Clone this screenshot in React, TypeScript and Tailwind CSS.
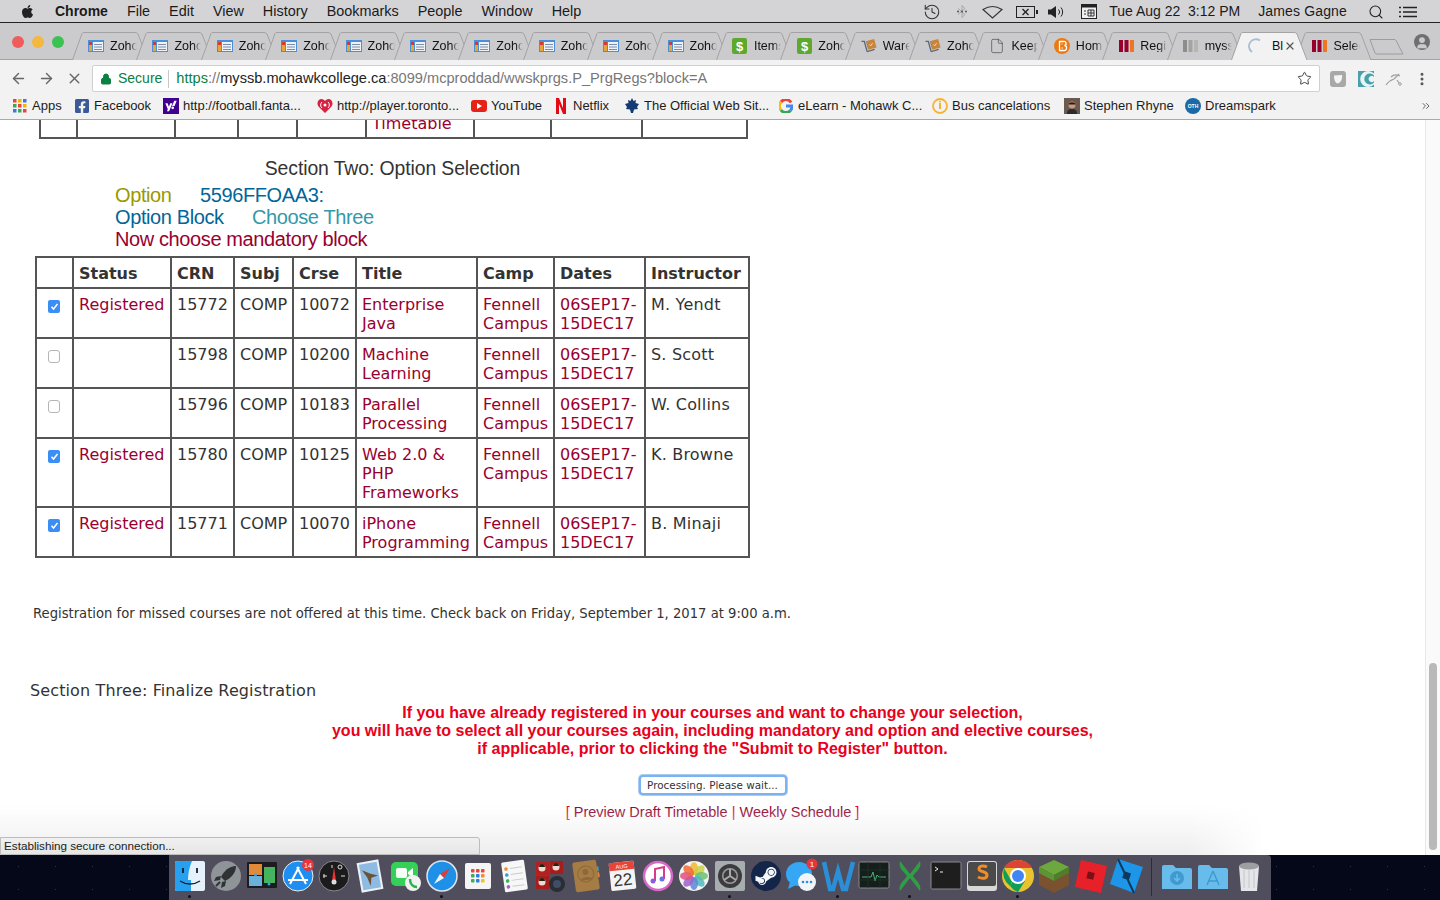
import React from "react";
import { ArrowLeft, ArrowRight, X, Lock, Star, Search, History, MoreVertical, File, User, ChevronsRight } from "lucide-react";
import { FaApple, FaFacebookSquare, FaYahoo, FaSteamSymbol } from "react-icons/fa";

const sans = "font-['Liberation_Sans',Arial,sans-serif]";

function ZohoIcon() {
  return (
    <svg width="16" height="14" viewBox="0 0 16 14">
      <rect x="0" y="1" width="16" height="12" fill="#4a8fd8" />
      <rect x="1" y="3" width="3" height="9" fill="#e8a33a" />
      <rect x="1" y="3" width="3" height="3" fill="#d83a2a" />
      <rect x="5" y="3" width="10" height="9" fill="#eef2f7" />
      <path d="M6 5.500h8M6 8h8M6 10.500h8" stroke="#7a8ea8" strokeWidth="1" />
    </svg>
  );
}
function DollarIcon() {
  return (
    <svg width="15" height="16" viewBox="0 0 15 16">
      <rect width="15" height="16" rx="2" fill="#5fa82e" />
      <text x="7.500" y="13" textAnchor="middle" fontSize="13" fontWeight="700" fill="#fff" fontFamily="Liberation Sans">$</text>
    </svg>
  );
}
function WareIcon() {
  return (
    <svg width="17" height="16" viewBox="0 0 17 16">
      <path d="M5 3l9-2.500 2.500 9-9 2.500z" fill="#c5853f" />
      <path d="M9 6.500l1.300 1.300 2-2.800" stroke="#f5e6d0" strokeWidth="1" fill="none" />
      <path d="M0.500 3l3 0 3 11" stroke="#4a6a8a" strokeWidth="1.400" fill="none" />
      <path d="M6.500 14l8-2.500" stroke="#666" strokeWidth="1.400" />
    </svg>
  );
}
function BarsIcon({ gray }: { gray?: boolean }) {
  return (
    <svg width="15" height="12" viewBox="0 0 15 12">
      <rect x="0" width="4" height="12" fill={gray ? "#8d8d8d" : "#98002e"} />
      <rect x="5.500" width="4" height="12" fill={gray ? "#a3a3a3" : "#98002e"} />
      <rect x="11" width="4" height="12" fill={gray ? "#b5b5b5" : "#ee7623"} />
    </svg>
  );
}
function CircleB() {
  return (
    <svg width="16" height="16" viewBox="0 0 16 16">
      <circle cx="8" cy="8" r="8" fill="#ec7a12" />
      <path d="M5.500 3.500h4a2 2 0 0 1 1 4 2.300 2.300 0 0 1-1 5h-4z" fill="none" stroke="#fff" strokeWidth="1.300" />
      <path d="M7.500 6h1M7.500 10h1.500" stroke="#fff" strokeWidth="1" />
    </svg>
  );
}

type Tab = { label: string; icon: React.ReactNode; active?: boolean };
const zoho = <ZohoIcon />;
const tabs: Tab[] = [
  ...Array.from({ length: 10 }, () => ({ label: "Zoho", icon: zoho })),
  { label: "Items", icon: <DollarIcon /> },
  { label: "Zoho", icon: <DollarIcon /> },
  { label: "Wareh", icon: <WareIcon /> },
  { label: "Zoho", icon: <WareIcon /> },
  { label: "Keep", icon: <File size={16} strokeWidth={1} color="#444" /> },
  { label: "Hom", icon: <CircleB /> },
  { label: "Regis", icon: <BarsIcon /> },
  { label: "myss", icon: <BarsIcon gray /> },
  {
    label: "Bl",
    active: true,
    icon: (
      <svg width="16" height="16" viewBox="0 0 16 16">
        <path d="M13 2.500A7 7 0 0 0 5 14" stroke="#a9bed4" strokeWidth="1.800" fill="none" />
      </svg>
    ),
  },
  { label: "Select", icon: <BarsIcon /> },
];

function TabItem({ t }: { t: Tab }) {
  return (
    <div className={`relative w-[64.400px] h-[28px] shrink-0 ${t.active ? "z-10" : ""}`}>
      <svg className="absolute left-[-3px] top-0" width="79" height="28" viewBox="0 0 79 28">
        <path
          d="M0.500 28 L10 1.500 Q10.500 0.500 12 0.500 L63 0.500 Q65 0.500 66 2 L76 28"
          fill={t.active ? "#f2f2f2" : "#cbcbcd"}
          stroke="#a3a3a5"
        />
      </svg>
      <div className="relative flex items-center h-full pl-[13px] gap-[6px]">
        <span className="w-[16px] flex justify-center shrink-0">{t.icon}</span>
        {t.active ? (
          <>
            <span className={`${sans} text-[12.500px] leading-none text-[#111] pl-[3px] w-[14px] overflow-hidden whitespace-nowrap`}>Bl</span>
            <X size={12} color="#555" strokeWidth={2.400} className="ml-[-5px]" />
          </>
        ) : (
          <span className={`${sans} text-[12.500px] leading-none text-[#111] w-[27px] overflow-hidden whitespace-nowrap [mask-image:linear-gradient(to_right,black_72%,transparent)]`}>{t.label}</span>
        )}
      </div>
    </div>
  );
}

type BM = { label: string; w: number; icon: React.ReactNode };
const bookmarks: BM[] = [
  {
    label: "Apps",
    w: 62,
    icon: (
      <svg width="14" height="14" viewBox="0 0 14 14">
        {[0, 5, 10].flatMap((y, i) =>
          [0, 5, 10].map((x, j) => (
            <rect key={`${i}${j}`} x={x} y={y} width="3.500" height="3.500" fill={["#e8453c", "#f4b400", "#3b78e7", "#3da854", "#e8453c", "#f4b400", "#3b78e7", "#3da854", "#e8453c"][i * 3 + j]} />
          ))
        )}
      </svg>
    ),
  },
  { label: "Facebook", w: 89, icon: <FaFacebookSquare size={16} color="#3b5998" /> },
  {
    label: "http://football.fanta...",
    w: 154,
    icon: (
      <span className="w-[16px] h-[16px] bg-[#400090] flex items-center justify-center">
        <FaYahoo size={12} color="#fff" />
      </span>
    ),
  },
  {
    label: "http://player.toronto...",
    w: 154,
    icon: (
      <svg width="16" height="14" viewBox="0 0 16 14">
        <path d="M8 14L1.500 7.500C-1 4 1.500 0 4.500 0 6 0 7.200 1 8 2 8.800 1 10 0 11.500 0 14.500 0 17 4 14.500 7.500z" fill="#d6213f" />
        <circle cx="8" cy="6" r="1.500" fill="#fff" />
        <path d="M5 9a4 4 0 0 1 0-6M11 9a4 4 0 0 0 0-6" stroke="#fff" fill="none" />
      </svg>
    ),
  },
  {
    label: "YouTube",
    w: 82,
    icon: (
      <svg width="16" height="12" viewBox="0 0 16 12">
        <rect width="16" height="12" rx="3" fill="#e62117" />
        <path d="M6 3l5 3-5 3z" fill="#fff" />
      </svg>
    ),
  },
  {
    label: "Netflix",
    w: 71,
    icon: (
      <svg width="10" height="16" viewBox="0 0 10 16">
        <path d="M0 0h3l4 10V0h3v16H7L3 6v10H0z" fill="#e50914" />
      </svg>
    ),
  },
  {
    label: "The Official Web Sit...",
    w: 154,
    icon: (
      <svg width="14" height="16" viewBox="0 0 14 16">
        <path d="M7 0l1.500 3L11 2l-.5 3L14 6l-2 3 1 2-4 .5-1 3.500H6l-1-3.500L1 11l1-2-2-3 3.500-1L3 2l2.500 1z" fill="#123a73" />
      </svg>
    ),
  },
  {
    label: "eLearn - Mohawk C...",
    w: 154,
    icon: (
      <svg width="14" height="14" viewBox="0 0 14 14" fill="none" strokeWidth="3">
        <path d="M12 3.500A6 6 0 0 0 2 3" stroke="#ea4335" />
        <path d="M2 3a6 6 0 0 0 0 8" stroke="#fbbc05" />
        <path d="M2 11a6 6 0 0 0 9.500 0.500" stroke="#34a853" />
        <path d="M11.500 11.500A6 6 0 0 0 13 7H7" stroke="#4285f4" />
      </svg>
    ),
  },
  {
    label: "Bus cancelations",
    w: 132,
    icon: (
      <svg width="16" height="16" viewBox="0 0 16 16" fill="none">
        <circle cx="8" cy="8" r="7" stroke="#f5b335" strokeWidth="1.800" />
        <path d="M8 5v6" stroke="#f5b335" strokeWidth="2" />
        <circle cx="8" cy="3.500" r="1" fill="#f5b335" />
      </svg>
    ),
  },
  {
    label: "Stephen Rhyne",
    w: 121,
    icon: (
      <svg width="16" height="16" viewBox="0 0 16 16">
        <rect width="16" height="16" fill="#6a5a50" />
        <circle cx="8" cy="7" r="3.500" fill="#c99a7c" />
        <path d="M4.500 6.500c0-3 7-3 7 0" fill="#2a1e18" />
        <path d="M3 16c0-4 2-5 5-5s5 1 5 5z" fill="#2c2a2e" />
      </svg>
    ),
  },
  {
    label: "Dreamspark",
    w: 100,
    icon: (
      <svg width="16" height="16" viewBox="0 0 16 16">
        <circle cx="8" cy="8" r="8" fill="#1a6aa5" />
        <text x="8" y="10" textAnchor="middle" fontSize="5" fontWeight="700" fill="#fff" fontFamily="Liberation Sans">OTH</text>
      </svg>
    ),
  },
];

type Row = { checked?: boolean; status: string; crn: string; crse: string; title: string[]; inst: string };
const rows: Row[] = [
  { checked: true, status: "Registered", crn: "15772", crse: "10072", title: ["Enterprise", "Java"], inst: "M. Yendt" },
  { status: "", crn: "15798", crse: "10200", title: ["Machine", "Learning"], inst: "S. Scott" },
  { status: "", crn: "15796", crse: "10183", title: ["Parallel", "Processing"], inst: "W. Collins" },
  { checked: true, status: "Registered", crn: "15780", crse: "10125", title: ["Web 2.0 &", "PHP", "Frameworks"], inst: "K. Browne" },
  { checked: true, status: "Registered", crn: "15771", crse: "10070", title: ["iPhone", "Programming"], inst: "B. Minaji" },
];

const td = "border-2 border-[#555] align-top pt-[6px] pl-[5px] pr-0 pb-[4px] whitespace-nowrap";
const th = "border-2 border-[#555] align-top pt-[6px] pl-[5px] pb-[3px] text-left font-bold";
const maroon = "text-[#99002f]";

function Check({ on }: { on?: boolean }) {
  return on ? (
    <span className="w-[12px] h-[13px] ml-[6px] rounded-[2px] bg-[#3b8ef5] flex items-center justify-center">
      <svg width="9" height="9" viewBox="0 0 9 9">
        <path d="M1.500 4.800L3.500 7 7.500 2" stroke="#fff" strokeWidth="1.500" fill="none" />
      </svg>
    </span>
  ) : (
    <span className="block w-[12px] h-[13px] ml-[6px] rounded-[3px] border border-[#b5b5b5] bg-white" />
  );
}

const stripCols = [37, 98, 63, 59, 69, 108, 77, 91, 105];

function Ico({ children }: { children: React.ReactNode }) {
  return (
    <svg width="36" height="36" viewBox="0 0 36 36">
      {children}
    </svg>
  );
}

const petals = ["#f4b730", "#c8d040", "#6cc070", "#50b8c0", "#5a88d8", "#a060c8", "#e05080", "#ee6a3c"];

const dock: { el: React.ReactNode; dot?: boolean }[] = [
  { dot: true, el: <Ico><rect x="3" y="3" width="30" height="30" rx="2" fill="#e6f2fb" /><path d="M3 5a2 2 0 0 1 2-2h15c-3 7-4 13-4 19h3v11H5a2 2 0 0 1-2-2z" fill="#27a0f0" /><path d="M11 10v5M25 10v5" stroke="#123" strokeWidth="1.800" /><path d="M8 23c6 4 14 4 20 0" stroke="#123" strokeWidth="1.300" fill="none" /></Ico> },
  { el: <Ico><circle cx="18" cy="18" r="15" fill="#8f9498" /><path d="M28 8c-7 0-12 5-15 11l4 4c6-3 11-8 11-15z" fill="#2f3336" /><path d="M13 18l-5 1-2 4 6-1zM18 23l-1 5-4 2 1-6z" fill="#2f3336" /><path d="M12 24l-4 4" stroke="#2f3336" strokeWidth="2" /></Ico> },
  { el: <Ico><rect x="3" y="4" width="30" height="26" rx="1" fill="#1c1c1e" /><rect x="5" y="6" width="13" height="11" fill="#e08a3a" /><rect x="5" y="18" width="13" height="10" fill="#6bb0d8" /><rect x="20" y="9" width="11" height="16" fill="#44b45e" /><circle cx="11.500" cy="17" r="1.500" fill="#3aa0e8" /><circle cx="25" cy="26" r="1.500" fill="#3aa0e8" /></Ico> },
  { el: <Ico><circle cx="18" cy="18" r="15" fill="#1f8ef1" stroke="#e8eef5" /><path d="M19 9l-9 17M17 9l9 17M8 22h20" stroke="#fff" strokeWidth="2" /><circle cx="28" cy="7" r="6" fill="#e8353a" /><text x="28" y="9.500" textAnchor="middle" fontSize="7" fill="#fff" fontFamily="Liberation Sans">14</text></Ico> },
  { el: <Ico><circle cx="18" cy="18" r="15" fill="#1b1b1d" stroke="#888" /><path d="M18 9l2 14h-4z" fill="#e33" /><circle cx="18" cy="24" r="2.500" fill="#ddd" /><path d="M7 18h4M8 16v4M25 18h4M16 7v3" stroke="#ddd" /><circle cx="24" cy="9" r="2" fill="none" stroke="#ddd" /></Ico> },
  { el: <Ico><g transform="rotate(-10 18 18)"><rect x="7" y="3" width="22" height="30" fill="#eef3f8" /><rect x="9" y="5" width="18" height="26" fill="#8dbbe4" /><path d="M11 11l8 5 7 3-7 1-2 8-2-9z" fill="#6b5338" /></g></Ico> },
  { el: <Ico><rect x="3" y="4" width="27" height="24" rx="5" fill="#34d058" /><rect x="8" y="10" width="11" height="10" rx="2" fill="#f4fff6" /><path d="M20 14l5-4v10l-5-4z" fill="#f4fff6" /><circle cx="25" cy="25" r="8" fill="#f2f2f2" /><path d="M22 21c0 5 3 8 7 8" stroke="#2ab24a" strokeWidth="2.500" fill="none" /></Ico> },
  { dot: true, el: <Ico><circle cx="18" cy="18" r="15" fill="#1e90e8" stroke="#dfe6ee" strokeWidth="1.500" /><path d="M26 10l-6 10-4-4z" fill="#e8382f" /><path d="M10 26l6-10 4 4z" fill="#f2f2f2" /></Ico> },
  { el: <Ico><rect x="5" y="5" width="26" height="26" rx="2" fill="#f5f5f5" />{[0, 1, 2].flatMap((a) => [0, 1, 2].map((b) => <rect key={`${a}${b}`} x={11 + b * 5} y={11 + a * 5} width="3.500" height="3.500" rx="0.800" fill={["#e8453c", "#e8453c", "#e8453c", "#3dae55", "#2d7fe0", "#f28b2c", "#3dae55", "#2d7fe0", "#f4c020"][a * 3 + b]} />))}</Ico> },
  { el: <Ico><g transform="rotate(-8 18 18)"><rect x="7" y="3" width="23" height="30" rx="1.500" fill="#f7f7f7" /><circle cx="11" cy="10" r="1.800" fill="#f28b2c" /><circle cx="11" cy="16" r="1.800" fill="#2d9fe0" /><circle cx="11" cy="22" r="1.800" fill="#3dae55" /><circle cx="11" cy="28" r="1.800" fill="#b05ad8" /><path d="M15 10h12M15 16h12M15 22h12M15 28h12" stroke="#ccc" /></g></Ico> },
  { el: <Ico><rect x="4" y="4" width="13" height="13" fill="#b32020" /><rect x="18" y="3" width="13" height="13" fill="#a51d1d" /><rect x="4" y="18" width="13" height="13" fill="#a51d1d" /><circle cx="10" cy="10" r="3.500" fill="#f0d8d0" /><path d="M7 9c0-4 6-4 6 0z" fill="#221" /><circle cx="24" cy="9" r="3.500" fill="#f0d8d0" /><path d="M21 8c0-4 6-4 6 0z" fill="#221" /><circle cx="10" cy="24" r="3.500" fill="#f0d8d0" /><path d="M7 23c0-4 6-4 6 0z" fill="#221" /><circle cx="25" cy="26" r="8" fill="#2a2d33" /><circle cx="25" cy="26" r="4" fill="#3f4d68" /></Ico> },
  { el: <Ico><g transform="rotate(-8 18 18)"><rect x="6" y="3" width="24" height="30" rx="2" fill="#a67c45" /><circle cx="18" cy="16" r="8" fill="none" stroke="#8d683a" /><circle cx="18" cy="14" r="3" fill="#8d683a" /><path d="M12 22c1-4 11-4 12 0" fill="#8d683a" /><rect x="30" y="10" width="1.500" height="5" fill="#4aa5b0" /><rect x="30" y="16" width="1.500" height="5" fill="#e88a3a" /></g></Ico> },
  { el: <Ico><g transform="rotate(-6 18 18)"><rect x="6" y="4" width="25" height="28" rx="1.500" fill="#f4f4f4" /><rect x="6" y="4" width="25" height="8" fill="#e8443a" /><text x="18.500" y="10.500" textAnchor="middle" fontSize="5.500" fill="#fff" fontFamily="Liberation Sans">AUG</text><text x="18.500" y="27.500" textAnchor="middle" fontSize="17" fill="#333" fontFamily="Liberation Sans">22</text></g></Ico> },
  { el: <Ico><circle cx="18" cy="18" r="14" fill="#fff" stroke="#d668c8" strokeWidth="2.500" /><path d="M15 23V11l9-2v12" stroke="#d83a8a" strokeWidth="2" fill="none" /><circle cx="13" cy="23" r="2.500" fill="#8a5ae0" /><circle cx="22" cy="21" r="2.500" fill="#6a70e8" /></Ico> },
  { el: <Ico><circle cx="18" cy="18" r="15" fill="#f4f4f4" />{petals.map((c, i) => <ellipse key={c} cx="18" cy="10.500" rx="4" ry="6.500" fill={c} opacity=".85" transform={`rotate(${i * 45} 18 18)`} />)}</Ico> },
  { dot: true, el: <Ico><rect x="3" y="3" width="30" height="30" rx="2" fill="#a8adb0" /><circle cx="18" cy="18" r="12" fill="#3c3c3e" /><circle cx="18" cy="18" r="8" fill="#9a9a9c" /><circle cx="18" cy="18" r="6.500" fill="#3c3c3e" /><path d="M18 18V11M18 18l6 4M18 18l-6 4" stroke="#aaa" strokeWidth="2" /></Ico> },
  { el: <Ico><circle cx="18" cy="18" r="15" fill="#13264a" /><FaSteamSymbol x={6} y={6} size={24} color="#f4f6f8" /></Ico> },
  { el: <Ico><ellipse cx="15" cy="16" rx="13" ry="12" fill="#35a7f4" /><path d="M6 24l-2 7 8-4z" fill="#35a7f4" /><circle cx="23" cy="24" r="9" fill="#f2f4f7" /><circle cx="19" cy="24" r="1.300" fill="#2a8fe0" /><circle cx="23" cy="24" r="1.300" fill="#2a8fe0" /><circle cx="27" cy="24" r="1.300" fill="#2a8fe0" /><circle cx="28" cy="6" r="5.500" fill="#e8353a" /><text x="28" y="9" textAnchor="middle" fontSize="8" fill="#fff" fontFamily="Liberation Sans">1</text></Ico> },
  { dot: true, el: <Ico><path d="M4 4l6 27h3l5-18 5 18h3l7-27" stroke="#2b8fd8" strokeWidth="4.500" fill="none" /></Ico> },
  { el: <Ico><rect x="3" y="4" width="30" height="26" rx="1.500" fill="#141e1a" stroke="#8a8a8a" /><path d="M6 19h9l2-5 2 9 2-6 2 2h7" stroke="#4cae7a" fill="none" /><path d="M3 12h30M3 22h30M12 4v26M24 4v26" stroke="#25332c" strokeWidth=".7" /></Ico> },
  { dot: true, el: <Ico><path d="M8 3l10 13L28 3c2 8-4 10-7 15 3 5 9 8 7 15L18 20 8 33c-2-7 4-10 7-15C12 13 6 11 8 3z" fill="#2f9e44" /></Ico> },
  { el: <Ico><rect x="3" y="4" width="30" height="27" rx="1.500" fill="#1e1e1e" stroke="#8a8a8a" /><path d="M7 9l3 2-3 2M12 14h3" stroke="#eee" fill="none" /></Ico> },
  { el: <Ico><rect x="3" y="3" width="30" height="30" rx="3" fill="#d8d8d8" /><rect x="4" y="4" width="28" height="24" rx="2" fill="#4a4a4a" /><path d="M23 9c-4-2-8-1-8 2s8 2 8 6-5 4-9 2" stroke="#f28c28" strokeWidth="3" fill="none" /></Ico> },
  { dot: true, el: <Ico><circle cx="18" cy="18" r="16" fill="#e8c32e" /><path d="M18 2a16 16 0 0 1 14 8H18z" fill="#db4437" /><path d="M4 10a16 16 0 0 1 14-8v8z" fill="#db4437" /><path d="M4 10l8 14-2 4A16 16 0 0 1 4 10z" fill="#0f9d58" /><path d="M10 28l3-5h12l-7 11A16 16 0 0 1 10 28z" fill="#0f9d58" /><circle cx="18" cy="18" r="8" fill="#fff" /><circle cx="18" cy="18" r="6" fill="#4285f4" /></Ico> },
  { el: <Ico><path d="M18 2l15 7v18l-15 8-15-8V9z" fill="#7a5230" /><path d="M18 2l15 7-15 8-15-8z" fill="#6ba83e" /><path d="M3 9l15 8v6L3 15z" fill="#5d9435" /><path d="M33 9L18 17v6l15-8z" fill="#4e7e2c" /></Ico> },
  { el: <Ico><path d="M9 2l26 6-6 27L3 29z" fill="#e8202a" /><rect x="15" y="14" width="7" height="7" fill="#7a1016" transform="rotate(13 18 18)" /></Ico> },
  { el: <Ico><path d="M10 1l25 8-9 26L2 26z" fill="#1d95e8" /><path d="M10 1l16 34" stroke="#0d3a5c" strokeWidth="2" /><rect x="15" y="14" width="7" height="7" fill="#0d3a5c" transform="rotate(18 18 18)" /></Ico> },
];

const tailDock: React.ReactNode[] = [
  <Ico key="a"><path d="M3 9a2 2 0 0 1 2-2h9l3 3h14a2 2 0 0 1 2 2v19H3z" fill="#68bcec" /><circle cx="18" cy="20" r="7" fill="#3f9ad0" /><path d="M18 16v7M15 20l3 3 3-3" stroke="#68bcec" strokeWidth="1.500" fill="none" /></Ico>,
  <Ico key="b"><path d="M3 9a2 2 0 0 1 2-2h9l3 3h14a2 2 0 0 1 2 2v19H3z" fill="#68bcec" /><path d="M18 13l-6 14M18 13l6 14M13 23h10" stroke="#3f9ad0" strokeWidth="1.500" fill="none" /></Ico>,
  <Ico key="c"><path d="M8 8h20l-2 25H10z" fill="#e3e5e8" /><ellipse cx="18" cy="8" rx="10" ry="3.500" fill="#9c9ea2" /><path d="M13 12v18M18 12v18M23 12v18" stroke="#c4c6ca" /></Ico>,
];

export default function App() {
  return (
    <div className={`${sans} w-[1440px] h-[900px] overflow-hidden flex flex-col relative bg-white`}>
      {/* Menu bar */}
      <div className="h-[23px] shrink-0 bg-[#d4d4d7] border-b border-[#222] flex items-center pt-[1px] text-[14.400px] text-[#1a1a1a]">
        <div className="flex items-center pl-[20px] gap-[19px]">
          <FaApple size={15} color="#222" />
          <span className="font-bold text-[14px] ml-[1px]">Chrome</span>
          <span>File</span>
          <span>Edit</span>
          <span>View</span>
          <span>History</span>
          <span>Bookmarks</span>
          <span>People</span>
          <span>Window</span>
          <span>Help</span>
        </div>
        <div className="ml-auto flex items-center pr-[23px] text-[14px]">
          <History size={18} color="#333" strokeWidth={1.400} />
          <svg width="12" height="15" viewBox="0 0 12 15" className="ml-[15px]">
            <path d="M2 4.500l7 6-3 3V1.500l3 3-7 6" stroke="#999" strokeWidth="0.800" fill="none" />
            <circle cx="2" cy="7.500" r="1" fill="#555" />
            <circle cx="6" cy="7.500" r="1" fill="#555" />
            <circle cx="10" cy="7.500" r="1" fill="#555" />
          </svg>
          <svg width="21" height="14" viewBox="0 0 21 14" className="ml-[14px]">
            <path d="M1 4.500Q10.500 -1.500 20 4.500L10.500 13z" fill="none" stroke="#333" strokeWidth="1.100" />
          </svg>
          <svg width="22" height="14" viewBox="0 0 22 14" className="ml-[13px]">
            <rect x="0.500" y="1.500" width="18" height="11" fill="none" stroke="#222" />
            <rect x="20" y="5" width="2" height="4" fill="#222" />
            <path d="M6.500 4l6 6M12.500 4l-6 6" stroke="#222" strokeWidth="1.300" />
          </svg>
          <svg width="17" height="14" viewBox="0 0 17 14" className="ml-[10px]">
            <path d="M0 4.500h3L8 1v12L3 9.500H0z" fill="#222" />
            <path d="M10.500 4.500a3.500 3.500 0 0 1 0 5M13 2.500a7 7 0 0 1 0 9" stroke="#222" fill="none" />
          </svg>
          <svg width="16" height="15" viewBox="0 0 16 15" className="ml-[16px]">
            <rect x="0.500" y="0.500" width="15" height="14" fill="#eee" stroke="#222" />
            <rect x="0.500" y="0.500" width="15" height="3" fill="#222" />
            <path d="M3 7h2M3 10h2M7 6h6v6H7zM10 6v6M7 9h6" stroke="#333" fill="none" />
          </svg>
          <span className="ml-[12px]">Tue Aug 22&nbsp;&nbsp;3:12 PM</span>
          <span className="ml-[18px] tracking-[0.150px]">James Gagne</span>
          <Search size={16} color="#222" className="ml-[21px]" strokeWidth={1.600} />
          <svg width="18" height="12" viewBox="0 0 18 12" className="ml-[15px]">
            <path d="M0 1.500h2M4 1.500h14M0 6h2M4 6h14M0 10.500h2M4 10.500h14" stroke="#222" strokeWidth="1.500" />
          </svg>
        </div>
      </div>

      {/* Tab strip */}
      <div className="h-[37px] shrink-0 bg-[#cbcbcd] flex items-end relative border-b border-[#a3a3a5]">
        <div className="flex items-center gap-[8px] pl-[12px] self-center mt-[2px]">
          <span className="w-[12px] h-[12px] rounded-full bg-[#ee5c5c]" />
          <span className="w-[12px] h-[12px] rounded-full bg-[#f4b73f]" />
          <span className="w-[12px] h-[12px] rounded-full bg-[#3cc153]" />
        </div>
        <div className="flex ml-[11px] mb-[-1px]">
          {tabs.map((t, i) => (
            <TabItem key={i} t={t} />
          ))}
        </div>
        <svg width="36" height="17" viewBox="0 0 36 17" className="mb-[4px] ml-[6px] shrink-0">
          <path d="M1 1.500h24a2 2 0 0 1 2 1l7 13.500H8a2 2 0 0 1-2-1z" fill="#cbcbcd" stroke="#9c9c9e" />
        </svg>
        <span className="ml-[9px] mb-[9px] w-[16px] h-[16px] rounded-full bg-[#6f6f6f] flex items-end justify-center overflow-hidden shrink-0">
          <User size={14} color="#cbcbcd" fill="#cbcbcd" />
        </span>
      </div>

      {/* Toolbar */}
      <div className="h-[36px] shrink-0 bg-[#f2f2f2] flex items-center pl-[10px] pr-[10px] pt-[1px]">
        <ArrowLeft size={17} color="#666" strokeWidth={2} />
        <ArrowRight size={17} color="#666" strokeWidth={2} className="ml-[11px]" />
        <X size={17} color="#666" strokeWidth={2} className="ml-[11px]" />
        <div className="ml-[9px] w-[1228px] h-[27px] bg-white border border-[#d0d0d0] rounded-[2px] flex items-center text-[14.600px] shrink-0">
          <Lock size={12} fill="#0b8043" color="#0b8043" className="ml-[7px]" />
          <span className="ml-[6px] text-[14px] text-[#0b8043]">Secure</span>
          <span className="ml-[6px] mr-[7px] h-[18px] border-l border-[#c8c8c8]" />
          <span className="text-[#0b8043]">https</span>
          <span className="text-[#777]">://</span>
          <span className="text-[#222]">myssb.mohawkcollege.ca</span>
          <span className="text-[#777]">:8099/mcproddad/wwskprgs.P_PrgRegs?block=A</span>
          <Star size={15} color="#444" strokeWidth={1.600} className="ml-auto mr-[7px]" />
        </div>
        <span className="ml-[10px] w-[16px] h-[16px] rounded-[3px] bg-[#a8a8a8] flex items-center justify-center shrink-0">
          <svg width="10" height="10" viewBox="0 0 10 10">
            <path d="M1 1.500L9 1c.5 4-1 8-5 8.500C1.500 8 1 5 1 1.500z" fill="#f4f4f4" />
          </svg>
        </span>
        <svg width="16" height="16" viewBox="0 0 16 16" className="ml-[12px] shrink-0">
          <rect width="16" height="16" fill="#4aa0a8" />
          <path d="M16 2.500a8 8 0 1 0 0 11v-2a5.500 5.500 0 1 1 0-7zM16 6a3 3 0 1 0 0 4z" fill="#e8f5f5" />
        </svg>
        <svg width="18" height="16" viewBox="0 0 18 16" className="ml-[11px] shrink-0">
          <path d="M1 14c2-3 5-5 8-6M9 8l5-5M6 6c2-2 5-3 9-1M12 9l2 3" stroke="#a0a0a0" strokeWidth="1.200" fill="none" />
          <circle cx="15" cy="13" r="1.300" fill="none" stroke="#a0a0a0" />
        </svg>
        <MoreVertical size={16} color="#555" strokeWidth={2.500} className="ml-[11px]" />
      </div>

      {/* Bookmarks */}
      <div className="h-[24px] shrink-0 bg-[#f2f2f2] border-b border-[#a9a9a9] flex items-center pl-[12px] pb-[4px] text-[13px] text-[#1c1c1c]">
        {bookmarks.map((b, i) => (
          <div key={i} className="flex items-center shrink-0" style={{ width: b.w }}>
            <span className="w-[16px] h-[16px] flex items-center justify-center mr-[4px] shrink-0">{b.icon}</span>
            <span className="whitespace-nowrap">{b.label}</span>
          </div>
        ))}
        <ChevronsRight size={12} color="#666" className="ml-auto mr-[8px]" />
      </div>

      {/* Page */}
      <div className="h-[735px] shrink-0 flex relative">
        <div className="flex-1 overflow-hidden font-['DejaVu_Sans',Verdana,sans-serif] text-[#333]">
          {/* clipped table above */}
          <div className="ml-[39px] w-[709px] h-[19px] flex border-x-2 border-b-2 border-[#555] overflow-hidden box-border">
            {stripCols.map((w, i) => (
              <div key={i} className={`h-full shrink-0 ${i < 8 ? "border-r-2 border-[#555]" : ""} overflow-hidden`} style={{ width: i === 8 ? w - 2 : w }}>
                {i === 5 && <div className={`${maroon} text-[16px] leading-[19px] mt-[-6px] pl-[5px]`}>Timetable</div>}
              </div>
            ))}
          </div>

          <div className={`${sans} text-[19.400px] leading-[22px] text-center w-[785px] mt-[18px] tracking-[-0.100px]`}>Section Two: Option Selection</div>
          <div className={`${sans} text-[20px] leading-[22px] ml-[115px] mt-[5px] tracking-[-0.390px]`}>
            <div className="flex">
              <span className="w-[85px] text-[#999900]">Option</span>
              <span className="text-[#006699]">5596FFOAA3:</span>
            </div>
            <div className="flex">
              <span className="w-[137px] text-[#006699]">Option Block</span>
              <span className="text-[#3399aa]">Choose Three</span>
            </div>
            <div className={maroon}>Now choose mandatory block</div>
          </div>

          {/* Table */}
          <table className="ml-[35px] mt-[6px] table-fixed border-collapse text-[16px] leading-[19px] w-[713px]">
            <colgroup>
              <col className="w-[37px]" />
              <col className="w-[98px]" />
              <col className="w-[63px]" />
              <col className="w-[59px]" />
              <col className="w-[63px]" />
              <col className="w-[121px]" />
              <col className="w-[77px]" />
              <col className="w-[91px]" />
              <col className="w-[104px]" />
            </colgroup>
            <thead>
              <tr className="h-[31px]">
                <th className={th}></th>
                <th className={th}>Status</th>
                <th className={th}>CRN</th>
                <th className={th}>Subj</th>
                <th className={th}>Crse</th>
                <th className={th}>Title</th>
                <th className={th}>Camp</th>
                <th className={th}>Dates</th>
                <th className={th}>Instructor</th>
              </tr>
            </thead>
            <tbody>
              {rows.map((r, i) => (
                <tr key={i}>
                  <td className="border-2 border-[#555] align-top p-0 pt-[11px] pl-[5px]"><Check on={r.checked} /></td>
                  <td className={`${td} ${maroon}`}>{r.status}</td>
                  <td className={td}>{r.crn}</td>
                  <td className={td}>COMP</td>
                  <td className={td}>{r.crse}</td>
                  <td className={`${td} ${maroon}`}>
                    {r.title.map((t) => (
                      <div key={t}>{t}</div>
                    ))}
                  </td>
                  <td className={`${td} ${maroon}`}>
                    <div>Fennell</div>
                    <div>Campus</div>
                  </td>
                  <td className={`${td} ${maroon}`}>
                    <div>06SEP17-</div>
                    <div>15DEC17</div>
                  </td>
                  <td className={`${td} tracking-[0.200px]`}>{r.inst}</td>
                </tr>
              ))}
            </tbody>
          </table>

          <div className="ml-[33px] mt-[48px] text-[13.160px] leading-[16px]">Registration for missed courses are not offered at this time. Check back on Friday, September 1, 2017 at 9:00 a.m.</div>
          <div className="ml-[30px] mt-[59px] text-[16px] leading-[20px] tracking-[0.120px]">Section Three: Finalize Registration</div>
          <div className={`${sans} mt-[3px] text-center font-bold text-[16px] leading-[18px] text-[#e8001c]`}>
            <div>If you have already registered in your courses and want to change your selection,</div>
            <div>you will have to select all your courses again, including mandatory and option and elective courses,</div>
            <div>if applicable, prior to clicking the "Submit to Register" button.</div>
          </div>
          <div className="flex justify-center mt-[17px]">
            <button className="w-[148px] h-[20px] bg-white border-2 border-[#7cb2f0] rounded-[4px] text-[10.400px] leading-none text-[#333] ring-1 ring-[#a8ccf5]">Processing. Please wait...</button>
          </div>
          <div className={`${sans} mt-[7px] text-center text-[14.500px] leading-[20px] text-[#e8001c]`}>
            [ <span className="text-[#8f002c]">Preview Draft Timetable</span> | <span className="text-[#8f002c]">Weekly Schedule</span> ]
          </div>
        </div>

        {/* Scrollbar */}
        <div className="w-[15px] shrink-0 bg-[#fafafa] border-l border-[#e8e8e8] flex flex-col justify-end items-center pb-[5px]">
          <div className="w-[8px] h-[187px] rounded-full bg-[#b9b9b9]" />
        </div>

        {/* Dock shadow + status bubble overlays */}
        <div className="absolute left-0 bottom-0 w-[1265px] h-[50px] bg-gradient-to-b from-transparent to-[#eeeeee] pointer-events-none [mask-image:linear-gradient(to_right,black_94%,transparent)]" />
        <div className="absolute left-0 bottom-0 w-[480px] h-[18px] bg-gradient-to-b from-[#f0f0f0] to-[#e6e6e6] border border-[#bdbdbd] rounded-tr-[3px] text-[11.700px] leading-[16px] pl-[3px] text-[#222] font-['Liberation_Sans',sans-serif]">Establishing secure connection...</div>
      </div>

      {/* Desktop + Dock */}
      <div className="flex-1 bg-[#040818] bg-[radial-gradient(#2a3350_0.5px,transparent_1px)] bg-[length:37px_23px] flex items-stretch">
        <div className="ml-[169px] w-[1102px] bg-[#504e5c] flex items-start pl-[3px] rounded-tr-[4px]">
          {dock.map((d, i) => (
            <div key={i} className="relative w-[36px] h-[45px] flex justify-center pt-[3px] shrink-0">
              {d.el}
              {d.dot && <span className="absolute left-[16px] bottom-[2px] w-[3px] h-[3px] rounded-full bg-[#111]" />}
            </div>
          ))}
          <div className="w-[1px] h-[38px] mt-[3px] mx-[7px] bg-[#2e2d36] shrink-0" />
          {tailDock.map((e, i) => (
            <div key={i} className="w-[36px] h-[45px] flex justify-center pt-[3px] shrink-0">{e}</div>
          ))}
        </div>
      </div>
    </div>
  );
}
